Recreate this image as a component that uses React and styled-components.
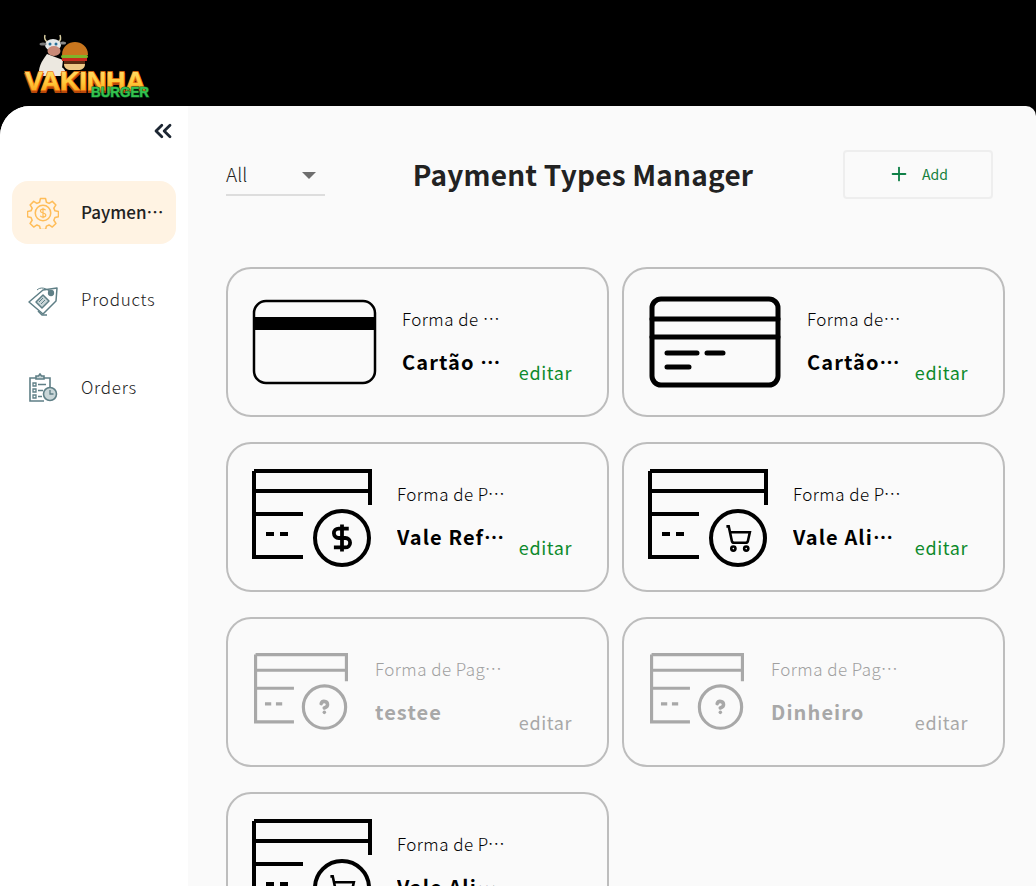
import React from "react"
import styled, { createGlobalStyle } from "styled-components"
import { ChevronsLeft, Plus } from "lucide-react"

const GlobalStyle = createGlobalStyle`
  html, body {
    margin: 0;
    padding: 0;
    height: 886px;
    overflow: hidden;
    background: #000;
    font-family: "Noto Sans CJK JP", "Noto Sans", sans-serif;
  }
  * { box-sizing: border-box; }
`

const Page = styled.div`
  display: flex;
  flex-direction: column;
  height: 886px;
  overflow: hidden;
`
const Header = styled.header`
  flex: 0 0 106px;
  background: #000;
  padding: 34px 0 0 23px;
`
const Body = styled.div`
  flex: 1;
  display: flex;
  min-height: 0;
  background: #fafafa;
  border-radius: 30px 10px 0 0;
  overflow: hidden;
`
const Sidebar = styled.aside`
  flex: 0 0 188px;
  background: #fff;
  padding: 12px 12px 0;
  display: flex;
  flex-direction: column;
`
const CollapseButton = styled.button`
  align-self: flex-end;
  height: 26px;
  width: 28px;
  margin-right: -1px;
  border: 0;
  padding: 0;
  background: none;
  color: #1d2733;
  display: flex;
  align-items: center;
  justify-content: center;
`
const Menu = styled.nav`
  margin-top: 37px;
  display: flex;
  flex-direction: column;
  gap: 24.5px;
`
const MenuItem = styled.a`
  height: 63px;
  border-radius: 16px;
  padding-left: 15px;
  display: flex;
  align-items: center;
  gap: 22px;
  background: ${p => (p.$active ? "#fff3e3" : "transparent")};
  color: #222;
  font-size: 17px;
  font-weight: ${p => (p.$active ? 500 : 300)};
  letter-spacing: ${p => (p.$active ? "0" : "0.75px")};
`
const MenuLabel = styled.span`
  width: 83px;
  margin-top: -3px;
  white-space: nowrap;
  overflow: hidden;
  text-overflow: ellipsis;
`
const Content = styled.main`
  flex: 1;
  min-width: 0;
  padding: 44px 31px 0 38px;
`
const Toolbar = styled.div`
  display: flex;
  align-items: center;
  justify-content: space-between;
  height: 49px;
  margin-bottom: 68px;
`
const Select = styled.div`
  width: 99px;
  height: 36px;
  margin-top: 7px;
  padding: 0 9px 7px 0;
  border-bottom: 2px solid #ddd;
  display: flex;
  align-items: center;
  justify-content: space-between;
  font-size: 19px;
  font-weight: 300;
  color: #222;
`
const Caret = styled.span`
  width: 0;
  height: 0;
  margin-top: 4px;
  border-left: 7px solid transparent;
  border-right: 7px solid transparent;
  border-top: 7px solid #6e6e6e;
`
const Title = styled.h1`
  margin: -2px 2px 0 0;
  font-size: 28px;
  font-weight: 700;
  letter-spacing: 0.2px;
  color: #222;
`
const AddButton = styled.button`
  width: 150px;
  height: 49px;
  margin-right: 12px;
  padding: 0 0 2px;
  border: 2px solid #eee;
  border-radius: 4px;
  background: transparent;
  color: #15803a;
  font-family: inherit;
  font-size: 14px;
  font-weight: 400;
  display: flex;
  align-items: center;
  justify-content: center;
  gap: 12px;
`
const Grid = styled.div`
  display: grid;
  grid-template-columns: 383px 383px;
  grid-auto-rows: 150px;
  column-gap: 13px;
  row-gap: 25px;
`
const Card = styled.article`
  border: 2px solid #bdbdbd;
  border-radius: 25px;
  padding: 0 35px 0 24px;
  display: flex;
  align-items: center;
  gap: 25px;
  color: ${p => (p.$off ? "#a8a8a8" : "#000")};
`
const CardIcon = styled.svg`
  flex: none;
  color: ${p => (p.$off ? "#a8a8a8" : "#000")};
`
const FormSvg = styled(CardIcon)`
  margin: ${p => (p.$off ? "1px 2px 0" : "4px 0 0")};
`
const CardText = styled.div`
  flex: 1;
  min-width: 0;
  display: flex;
  flex-direction: column;
  gap: 16px;
  margin-top: -3px;
`
const CardKind = styled.span`
  font-size: 17px;
  font-weight: 300;
  line-height: 26px;
  letter-spacing: 0.45px;
  color: ${p => (p.$off ? "#a0a0a0" : "#000")};
  white-space: nowrap;
  overflow: hidden;
  text-overflow: ellipsis;
`
const CardName = styled.strong`
  font-size: 20px;
  font-weight: 700;
  line-height: 28px;
  letter-spacing: 1.1px;
  white-space: nowrap;
  overflow: hidden;
  text-overflow: ellipsis;
`
const EditLink = styled.a`
  flex: none;
  align-self: flex-end;
  margin: 0 0 30px -13px;
  font-size: 18px;
  font-weight: 400;
  line-height: 26px;
  letter-spacing: 0.6px;
  color: ${p => (p.$off ? "#a8a8a8" : "#0e8a2c")};
`

const Logo = () => (
  <svg width="128" height="66" viewBox="0 0 128 66">
    <defs>
      <linearGradient id="gold" x1="0" y1="0" x2="0" y2="1">
        <stop offset="0" stopColor="#ffe27a" />
        <stop offset="0.55" stopColor="#ffc93a" />
        <stop offset="1" stopColor="#f7940f" />
      </linearGradient>
    </defs>
    {/* cow */}
    <path d="M24 20c-6 8-9 14-8 22h22l2-16z" fill="#ece8e0" />
    <path d="M25 8c-3-1-4-4-3-7M35 8c3-1 3-4 2-7" stroke="#d8cda0" strokeWidth="1.500" fill="none" />
    <ellipse cx="30" cy="11" rx="8" ry="6" fill="#e4e8e8" />
    <ellipse cx="20" cy="10" rx="3.500" ry="1.600" fill="#7a7a7a" />
    <ellipse cx="40" cy="9" rx="3" ry="1.500" fill="#8a8a8a" />
    <ellipse cx="31" cy="17" rx="6.500" ry="5" fill="#c98a78" />
    <circle cx="27" cy="10" r="1.500" fill="#2a6f96" />
    <circle cx="33" cy="10" r="1.500" fill="#2a6f96" />
    {/* burger */}
    <path d="M39 21c0-9 7-13 13-13s13 4 13 13z" fill="#c8761e" />
    <rect x="38" y="21" width="27" height="3" rx="1.500" fill="#7eb52a" />
    <rect x="39" y="24" width="25" height="3" fill="#c72a1e" />
    <rect x="41" y="27" width="21" height="3" fill="#5a2c12" />
    <path d="M41 30h21c0 4-3 6-7 6h-7c-4 0-7-2-7-6z" fill="#eec887" />
    <path d="M38 33c3 1 5 4 5 8h-5z" fill="#ece8e0" />
    {/* word mark */}
    <text x="2" y="58" fontFamily="Liberation Sans, sans-serif" fontWeight="700" fontSize="26" textLength="120" lengthAdjust="spacingAndGlyphs" fill="#b8480a" stroke="#b8480a" strokeWidth="2">VAKINHA</text>
    <text x="2" y="56" fontFamily="Liberation Sans, sans-serif" fontWeight="700" fontSize="26" textLength="120" lengthAdjust="spacingAndGlyphs" fill="url(#gold)" stroke="#f07a10" strokeWidth="1.500" paintOrder="stroke">VAKINHA</text>
    <text x="68" y="63" fontFamily="Liberation Sans, sans-serif" fontWeight="700" fontSize="14" textLength="58" lengthAdjust="spacingAndGlyphs" fill="#35c24e" stroke="#0b6b2a" strokeWidth="1.200" paintOrder="stroke">BURGER</text>
  </svg>
)

const GearIcon = () => (
  <svg width="32" height="32" viewBox="0 0 31 31" fill="none" stroke="#ffbd59" strokeWidth="1.500" strokeLinejoin="round">
    <path d="M13 1.500h5l.8 3.600 2.600 1.100 3.100-2 3.500 3.500-2 3.100 1.100 2.600 3.400.7v5l-3.400.8-1.100 2.600 2 3.100-3.500 3.500-3.100-2-2.600 1.100-.8 3.300h-5l-.8-3.300-2.600-1.100-3.100 2-3.500-3.500 2-3.100-1.100-2.600-3.400-.8v-5l3.400-.7 1.100-2.600-2-3.100 3.500-3.500 3.100 2 2.600-1.100z" />
    <circle cx="15.500" cy="15.500" r="7.500" />
    <path d="M18 12.800c-.5-.8-1.400-1.100-2.500-1.100-1.400 0-2.500.7-2.500 1.900 0 2.600 5.200 1.200 5.200 3.900 0 1.200-1.200 1.900-2.700 1.900-1.200 0-2.200-.4-2.700-1.300M15.500 10.300v10.400" strokeWidth="1.200" />
  </svg>
)

const TagIcon = () => (
  <svg width="32" height="32" viewBox="0 0 32 32" fill="none" stroke="#5f7f86" strokeWidth="1.500" strokeLinejoin="round">
    <path d="M20 31l-5 0-4-4" />
    <path d="M16 6l14-2-1 13-13 13L2 18z" fill="#fff" />
    <path d="M9 18l7-7 6 6-7 7z" fill="#c9d6d8" />
    <path d="M12 18l4-4M14 20l4-4" strokeWidth="1" />
    <circle cx="24" cy="9" r="2.400" fill="#5f7f86" />
    <path d="M24 9C19 3 13 3 10 6" strokeWidth="1" />
  </svg>
)

const OrdersIcon = () => (
  <svg width="32" height="30" viewBox="0 0 32 30" fill="none" stroke="#5f7f86" strokeWidth="1.600">
    <path d="M17 28H3V5h20v9" />
    <path d="M9 6V3h2.500l1.500-2 1.500 2H17v3z" fill="#c9d6d8" />
    <path d="M6 10h3v3H6zM6 16h3v3H6zM6 22h3v3H6zM11 11.500h8M11 17.500h5M11 23.500h4" strokeWidth="1.300" />
    <circle cx="23" cy="21" r="6.500" fill="#c9d6d8" />
    <path d="M23 17v4h3.500" strokeWidth="1.300" />
  </svg>
)

const BackCardIcon = () => (
  <CardIcon width="125" height="86" viewBox="0 0 125 86" fill="none">
    <rect x="2" y="2" width="121" height="82" rx="12" stroke="currentColor" strokeWidth="2.500" />
    <rect x="2" y="18" width="121" height="13" fill="currentColor" />
  </CardIcon>
)

const FrontCardIcon = () => (
  <CardIcon width="134" height="96" viewBox="0 0 134 96" fill="none" stroke="currentColor" strokeWidth="5" strokeLinecap="round">
    <rect x="4" y="5" width="126" height="86" rx="9" />
    <path d="M4 25h126M4 43h126" />
    <path d="M19 59h30M59 59h16M19 73h22" />
  </CardIcon>
)

const badges = {
  dollar: (
    <g transform="translate(73.800 52.800) scale(1.350)" strokeWidth="2.800">
      <path d="M12 2v20" />
      <path d="M17 5H9.500a3.500 3.500 0 0 0 0 7h5a3.500 3.500 0 0 1 0 7H6" />
    </g>
  ),
  cart: (
    <g transform="translate(76 55) scale(1.170)" strokeWidth="2.200">
      <circle cx="8" cy="21" r="1.800" />
      <circle cx="19" cy="21" r="1.800" />
      <path d="M2.050 2.050h2l2.660 12.420a2 2 0 0 0 2 1.580h9.780a2 2 0 0 0 1.950-1.570l1.650-7.430H5.120" />
    </g>
  ),
  question: (
    <g transform="translate(73 52) scale(1.400)" strokeWidth="3.200" strokeLinecap="round">
      <path d="M9.090 9a3 3 0 0 1 5.830 1c0 2-3 3-3 3" />
      <path d="M12 17h.01" />
    </g>
  ),
}

const FormIcon = ({ badge, width = 120, off }) => (
  <FormSvg $off={off} width={width} height={(width * 100) / 120} viewBox="0 0 120 100" fill="none" stroke="currentColor" strokeWidth="4">
    <path d="M2 2h116v34M2 22h116M51 88H2V2M2 45h49M14 65h8M28 65h8" />
    <circle cx="90" cy="69" r="27" />
    {badges[badge]}
  </FormSvg>
)

const payments = [
  { id: 1, icon: <BackCardIcon />, kind: "Forma de Pagamento", name: "Cartão de crédito" },
  { id: 2, icon: <FrontCardIcon />, kind: "Forma de Pagamento", name: "Cartão de débito" },
  { id: 3, icon: <FormIcon badge="dollar" />, kind: "Forma de Pagamento", name: "Vale Refeição" },
  { id: 4, icon: <FormIcon badge="cart" />, kind: "Forma de Pagamento", name: "Vale Alimentação" },
  { id: 5, icon: <FormIcon badge="question" width={94} off />, kind: "Forma de Pagamento", name: "testee", off: true },
  { id: 6, icon: <FormIcon badge="question" width={94} off />, kind: "Forma de Pagamento", name: "Dinheiro", off: true },
  { id: 7, icon: <FormIcon badge="cart" />, kind: "Forma de Pagamento", name: "Vale Alimentação" },
]

const App = () => (
  <Page>
    <GlobalStyle />
    <Header>
      <Logo />
    </Header>
    <Body>
      <Sidebar>
        <CollapseButton>
          <ChevronsLeft size={28} strokeWidth={2.4} />
        </CollapseButton>
        <Menu>
          <MenuItem $active>
            <GearIcon />
            <MenuLabel>Payment Types</MenuLabel>
          </MenuItem>
          <MenuItem>
            <TagIcon />
            <MenuLabel>Products</MenuLabel>
          </MenuItem>
          <MenuItem>
            <OrdersIcon />
            <MenuLabel>Orders</MenuLabel>
          </MenuItem>
        </Menu>
      </Sidebar>
      <Content>
        <Toolbar>
          <Select>
            All
            <Caret />
          </Select>
          <Title>Payment Types Manager</Title>
          <AddButton>
            <Plus size={22} strokeWidth={2} color="#0e7f46" />
            Add
          </AddButton>
        </Toolbar>
        <Grid>
          {payments.map(p => (
            <Card key={p.id} $off={p.off}>
              {p.icon}
              <CardText>
                <CardKind $off={p.off}>{p.kind}</CardKind>
                <CardName>{p.name}</CardName>
              </CardText>
              <EditLink $off={p.off}>editar</EditLink>
            </Card>
          ))}
        </Grid>
      </Content>
    </Body>
  </Page>
)

export default App
